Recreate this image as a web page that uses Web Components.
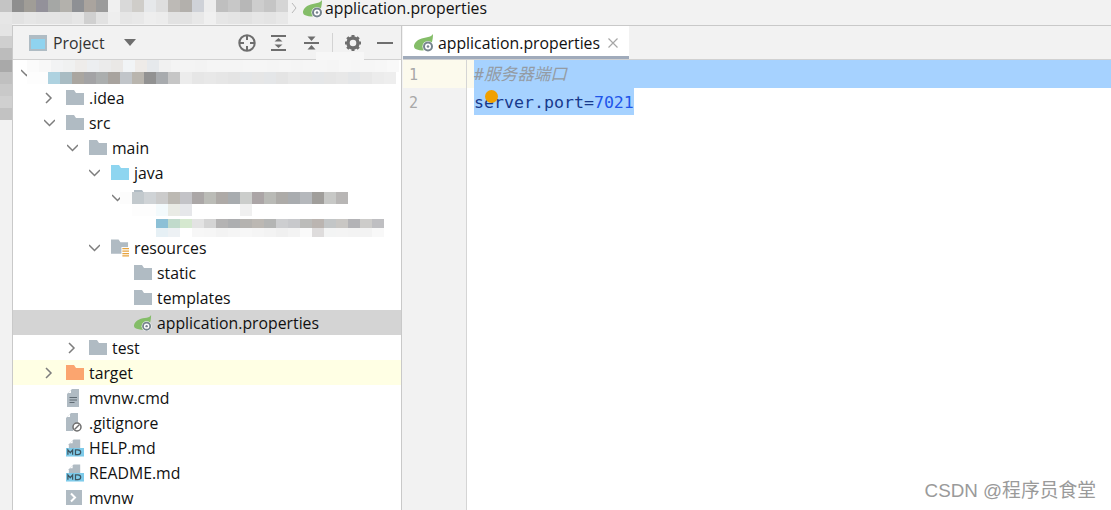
<!DOCTYPE html>
<html>
<head>
<meta charset="utf-8">
<title>application.properties</title>
<style>
    html, body { margin: 0; padding: 0; background: #f2f2f2; }
    body { width: 1111px; height: 510px; overflow: hidden; font-family: "Open Sans", "Noto Sans CJK SC", sans-serif; }
</style>
</head>
<body>
<ide-window>
    <top-bar slot="top">application.properties</top-bar>
    <project-pane slot="left">
        <tree-row depth="-1" arrow="down"></tree-row>
        <tree-row depth="0" arrow="right" icon="folder">.idea</tree-row>
        <tree-row depth="0" arrow="down" icon="folder">src</tree-row>
        <tree-row depth="1" arrow="down" icon="folder">main</tree-row>
        <tree-row depth="2" arrow="down" icon="source">java</tree-row>
        <tree-row depth="3" arrow="down" icon="folder"></tree-row>
        <tree-row depth="4"></tree-row>
        <tree-row depth="2" arrow="down" icon="resources">resources</tree-row>
        <tree-row depth="3" icon="folder">static</tree-row>
        <tree-row depth="3" icon="folder">templates</tree-row>
        <tree-row depth="3" icon="spring" state="selected">application.properties</tree-row>
        <tree-row depth="1" arrow="right" icon="folder">test</tree-row>
        <tree-row depth="0" arrow="right" icon="excluded" state="ignored">target</tree-row>
        <tree-row depth="0" icon="text">mvnw.cmd</tree-row>
        <tree-row depth="0" icon="ignore">.gitignore</tree-row>
        <tree-row depth="0" icon="md">HELP.md</tree-row>
        <tree-row depth="0" icon="md">README.md</tree-row>
        <tree-row depth="0" icon="shell">mvnw</tree-row>
    </project-pane>
    <editor-pane slot="main" file="application.properties"></editor-pane>
</ide-window>

<!-- blurred-out areas of the screenshot -->
<mosaic-patch style="left:0;top:0" size="12" cols="24" colors="#c4c4c4 #8e8e8e #a09d97 #93919a #a5a7a5 #b3b1ac #8e9094 #aaa49e #9b9b9b #f0f0f0 #d9d9d9 #cfcdc9 #e6e8ea #dedede #bdbab6 #b3b0ac #cfd2d8 #ededed #bfbfbf #c7c7c7 #b7b7b7 #cdcdcd #c5c5c5 #d5d5d5 #e6e6e6 #e2e2e2 #e6e6e6 #e4e4e4 #e4e4e4 #e2e2e2 #e6e6e6 #d0d0d0 #e2e2e2 #eeeeee #e6e6e6 #e8e8e8 #eeeeee #ececec #e2e2e2 #e2e2e2 #e8e8e8 #f0f0f0 #e6e6e6 #e4e4e4 #e2e2e2 #e6e6e6 #e4e4e4 #e8e8e8"></mosaic-patch>
<mosaic-patch style="left:0;top:24px" size="12" cols="1" colors="#e4e4e4 #cfcfcf #bcbcbc #a9a9a9 #c0c0c0 #c9c9c9 #d0d0d0 #c2c2c2"></mosaic-patch>
<mosaic-patch style="left:27px;top:60px" size="12" cols="31" colors="#fbfbfb #f8f8f8 #f2f3f4 #f0f1f1 #eeecea #eceef0 #ebebeb #eae8e6 #f1f4f6 #eeebe8 #e6e9ec #f1f1f1 #f4f4f4 #f4f4f4 #f3f3f3 #f5f5f5 #f5f5f5 #f5f5f5 #f6f6f6 #f6f6f6 #f5f5f5 #f6f6f6 #f5f5f5 #f6f6f6 #f6f6f6 #f5f5f5 #f7f7f7 #f6f6f6 #f6f6f6 #f7f7f7 #f9f9f9"></mosaic-patch>
<mosaic-patch style="left:27px;top:72px" size="21" height="12" cols="1" colors="#fdfdfd"></mosaic-patch>
<mosaic-patch style="left:48px;top:72px" size="12" cols="29" colors="#aed2e0 #a9bcc3 #aaa6a0 #a3a3a5 #abaeae #a8a39e #c1c5c9 #b9b5ae #929292 #a8abae #c6c6c6 #ececec #e6e6e6 #e8e8e8 #e6e6e6 #e4e4e4 #e4e6e8 #e6e6e6 #e4e6e8 #e4e4e4 #e8e8e8 #e6e6e6 #e4e6e8 #e6e6e6 #e8e8e8 #e4e6e8 #e8e8e8 #ececec #eeeeee"></mosaic-patch>
<mosaic-patch style="left:120px;top:192px" size="12" cols="19" colors="#fcfcfc #c2c9cd #cfd3d6 #cbcbcb #bcb9b3 #c3c3c7 #aba7a7 #bbbcb7 #aeaaa7 #a8acaf #cbcdcb #aba5a6 #b9bab6 #adaba8 #a9acaf #b5b8bc #a09e9b #c7c8c6 #b8b6b5 #fff #fdfdfd #fdfdfd #f3fafc #e9ebe5 #e6e7ea #fff #fff #fff #fff #f0f0f0 #fff #fff #fff #fff #fff #fff #fff #fff"></mosaic-patch>
<mosaic-patch style="left:156px;top:219px" size="12" height="9" cols="19" colors="#8cc0d6 #c0dacb #d5e8cf #e3e3e3 #d4d4d4 #b4b3b3 #adaeb0 #b5b3b0 #bcb8b3 #b4b5b4 #cdced0 #c8c9cc #bcbcba #bbb5b1 #c3c6c7 #c9c7c4 #b3b3b6 #cdccca #bfbfc2 #e6f0f5 #edf1f4 #fff #f7f7f7 #f6f6f6 #f3f3f3 #f5f5f5 #f7f7f7 #f5f5f5 #f3f3f3 #f0f0f0 #f3f3f3 #fafafa #dedcdc #f3f4f4 #f4f4f4 #f3f3f3 #f3f3f3 #f8f8f8"></mosaic-patch>
<mosaic-patch style="left:316px;top:52px" size="12" height="8" cols="4" colors="#f7f7f7 #f7f7f7 #f7f7f7 #f7f7f7"></mosaic-patch>

<script>
/* all the little tool window / file type icons */
const ICONS = {
    folder: `<svg width="18" height="15" viewBox="0 0 18 15"><path fill="#b0bbc3" d="M0 0h8l2 3h8v12H0z"/></svg>`,
    source: `<svg width="18" height="15" viewBox="0 0 18 15"><path fill="#8ed5f0" d="M0 0h8l2 3h8v12H0z"/></svg>`,
    excluded: `<svg width="18" height="15" viewBox="0 0 18 15"><path fill="#fba56f" d="M0 0h8l2 3h8v12H0z"/></svg>`,
    resources: `<svg width="19" height="18" viewBox="0 0 19 18"><path fill="#b0bbc3" d="M0 0h8l2 3h8v12H0z"/><rect x="11" y="8" width="8" height="10" fill="#fff"/><path stroke="#e8a33d" stroke-width="1.400" d="M12 9.700h7M12 12.300h7M12 14.900h7M12 17.400h7"/></svg>`,
    spring: `<svg width="20" height="18" viewBox="0 0 20 18"><path fill="#84bd68" d="M19 0c-1.500 2.500-4 3-7 3.500C6 4.300 1 7 0 11.500c-.2 2 .8 3.500 3 4 4 1.500 8.500 1 11-.5 3.500-3 5-9 5-15z"/><circle cx="14" cy="12.500" r="5.500" fill="#fff"/><circle cx="14" cy="12.500" r="4" fill="none" stroke="#76848e" stroke-width="2"/><circle cx="14" cy="12.500" r="1.300" fill="#76848e"/></svg>`,
    text: `<svg width="14" height="18" viewBox="0 0 14 18"><path fill="#b0bbc3" d="M6 0h7v18H1V5z"/><path fill="#fff" d="M5 1v3H2z"/><path stroke="#5f6a72" stroke-width="1.200" d="M3.500 8.500h7.500M3.500 11h7.500M3.500 13.500h5"/></svg>`,
    ignore: `<svg width="16" height="19" viewBox="0 0 16 19"><path fill="#b0bbc3" d="M5 0h7v13H7v5H0V5z"/><path fill="#fff" d="M4 1v3H1z"/><circle cx="11" cy="14" r="4" fill="#fff" stroke="#6e6e6e" stroke-width="1.500"/><path stroke="#6e6e6e" stroke-width="1.500" d="M8.500 16.500l5-5"/></svg>`,
    md: `<svg width="19" height="18" viewBox="0 0 19 18"><path fill="#b0bbc3" d="M8 0h7v9H3V5z"/><path fill="#fff" d="M7 1v3H4z"/><rect y="9" width="19" height="9" fill="#7ecbea"/><path fill="none" stroke="#3f5560" stroke-width="1.300" d="M2 16v-5l2.500 3 2.500-3v5M10 11v5h2.500q3 0 3-2.500t-3-2.500z"/></svg>`,
    shell: `<svg width="16" height="15" viewBox="0 0 16 15"><rect width="16" height="15" fill="#b0bbc3"/><path fill="none" stroke="#fff" stroke-width="2" d="M5 3.500l4 4-4 4"/></svg>`
};

class IdeWindow extends HTMLElement {
    constructor() {
        super();
        this.attachShadow({ mode: "open" });
    }

    connectedCallback() {
        this.shadowRoot.innerHTML = `
            <style>
                :host { display: grid; grid-template-rows: 26px 484px; width: 1111px; height: 510px; }
                .body { display: grid; grid-template-columns: 403px 1fr; min-height: 0; }
            </style>
            <slot name="top"></slot>
            <div class="body">
                <slot name="left"></slot>
                <slot name="main"></slot>
            </div>
        `;
    }
}

class TopBar extends HTMLElement {
    constructor() {
        super();
        this.attachShadow({ mode: "open" });
    }

    connectedCallback() {
        this.shadowRoot.innerHTML = `
            <style>
                :host {
                    display: flex; align-items: flex-start; box-sizing: border-box;
                    padding-left: 291px; height: 26px; background: #f2f2f2; border-bottom: 1px solid #c9c9c9;
                    font: 15.8px/17px "Open Sans", sans-serif; color: #111;
                }
                .chev { margin: 2px 6px 0 0; }
                .leaf { margin: 0 2px 0 0; display: flex; }
            </style>
            <svg class="chev" width="6" height="12" viewBox="0 0 6 12"><path d="M1 1l4 5-4 5" fill="none" stroke="#b9b9b9" stroke-width="1"/></svg>
            <div class="leaf">${ICONS.spring}</div>
            <span><slot></slot></span>
        `;
    }
}

class ProjectPane extends HTMLElement {
    constructor() {
        super();
        this.attachShadow({ mode: "open" });
    }

    connectedCallback() {
        this.shadowRoot.innerHTML = `
            <style>
                :host {
                    display: block; box-sizing: border-box; margin: 0 1px 0 12px; height: 484px;
                    border-left: 1px solid #c9c9c9; border-right: 1px solid #c9c9c9;
                    background: #fff; overflow: hidden;
                }
                header {
                    display: flex; align-items: center; box-sizing: border-box; height: 34px;
                    padding: 0 0 0 16px; background: #f2f2f2; border-bottom: 1px solid #d1d1d1;
                    font: 15.8px "Open Sans", sans-serif; color: #333;
                }
                .title { margin-left: 6px; }
                .caret { margin-left: 19px; }
                .tools { display: flex; align-items: center; margin-left: auto; padding-right: 8px; }
                .tools > * { flex: none; }
                .sep { width: 1px; height: 20px; background: #d3d3d3; }
            </style>
            <header>
                <svg width="18" height="16" viewBox="0 0 18 16"><rect width="18" height="16" fill="#afbcc4"/><rect x="2" y="4" width="14" height="10" fill="#8fd3ef"/></svg>
                <span class="title">Project</span>
                <svg class="caret" width="12" height="7" viewBox="0 0 12 7"><path d="M0 0h12L6 7z" fill="#6e6e6e"/></svg>
                <div class="tools">
                    <svg width="18" height="18" viewBox="0 0 18 18" fill="none" stroke="#6e6e6e" stroke-width="2"><circle cx="9" cy="9" r="7.700"/><path d="M9 2v4M9 12v4M2 9h4M12 9h4"/></svg>
                    <svg style="margin-left:14px" width="18" height="18" viewBox="0 0 18 18" fill="#6e6e6e"><path d="M1 1h15v2H1zM1 15h15v2H1zM8.500 4l4 3.500h-8zM8.500 14l-4-3.500h8z"/></svg>
                    <svg style="margin-left:15px" width="18" height="18" viewBox="0 0 18 18" fill="#6e6e6e"><path d="M1 8h15v2H1zM8.500 7l-4-4.500h8zM8.500 11l4 4.500h-8z"/></svg>
                    <div class="sep" style="margin-left:11px"></div>
                    <svg style="margin-left:11px" width="18" height="18" viewBox="0 0 18 18"><circle cx="9" cy="9" r="5" fill="none" stroke="#6e6e6e" stroke-width="3.400"/><path stroke="#6e6e6e" stroke-width="3" d="M9 1v3M9 14v3M1 9h3M14 9h3M3.300 3.300l2.100 2.100M12.600 12.600l2.100 2.100M3.300 14.700l2.100-2.100M12.600 5.400l2.100-2.100"/></svg>
                    <svg style="margin-left:15px" width="16" height="18" viewBox="0 0 16 18"><rect y="8" width="16" height="2" fill="#6e6e6e"/></svg>
                </div>
            </header>
            <slot></slot>
        `;
    }
}

class TreeRow extends HTMLElement {
    constructor() {
        super();
        this.attachShadow({ mode: "open" });
    }

    connectedCallback() {
        const depth = Number(this.getAttribute("depth") || 0);
        const arrow = this.getAttribute("arrow");
        const icon = this.getAttribute("icon");
        const left = 31 + Math.round(depth * 22.7);
        let chevron = "";
        if (arrow === "right") chevron = `<path d="M2 1l5 5-5 5"/>`;
        if (arrow === "down") chevron = `<path d="M0 3l5.500 5.500L11 3"/>`;
        this.shadowRoot.innerHTML = `
            <style>
                :host {
                    display: flex; align-items: center; box-sizing: border-box; height: 25px;
                    padding-left: ${left}px; white-space: nowrap;
                    font: 15.8px "Open Sans", sans-serif; color: #111;
                }
                :host([state="selected"]) { background: #d4d4d4; }
                :host([state="ignored"]) { background: #ffffe4; }
                .arrow { width: 11px; height: 12px; flex: none; }
                .icon { display: flex; width: 18px; margin-left: 11px; flex: none; }
                .text { margin-left: 5px; }
            </style>
            <svg class="arrow" viewBox="0 0 11 12" fill="none" stroke="#7d7d7d" stroke-width="1.500">${chevron}</svg>
            <div class="icon">${icon ? ICONS[icon] : ""}</div>
            <span class="text"><slot></slot></span>
        `;
    }
}

class EditorPane extends HTMLElement {
    constructor() {
        super();
        this.attachShadow({ mode: "open" });
    }

    connectedCallback() {
        this.shadowRoot.innerHTML = `
            <style>
                :host { display: grid; grid-template-rows: 34px 1fr; height: 484px; background: #fff; position: relative; }
                .tabs { background: #f2f2f2; border-bottom: 1px solid #d1d1d1; display: flex; }
                .tab {
                    display: flex; align-items: center; box-sizing: border-box; width: 226px; height: 33px;
                    padding: 4px 0 0 11px; background: #fff; border-bottom: 3px solid #a0abbb;
                    font: 15.8px "Open Sans", sans-serif; color: #111;
                }
                .tab span { margin-left: 4px; }
                .tab svg:last-child { margin-left: 8px; }
                .content { display: grid; grid-template-columns: 64px 1fr; grid-template-rows: 28px 27px 1fr; }
                .num {
                    box-sizing: border-box; padding-left: 6px; border-right: 1px solid #d5d5d5; background: #f2f2f2;
                    font: 15px/30px "DejaVu Sans Mono", monospace; color: #a8a8a8;
                }
                .num.current { background: #fcfaed; }
                .code { padding-left: 7px; }
                .code.current { background: #fcfaed; }
                .sel {
                    display: block; background: #a6d2ff;
                    font: 16.6px/29px "DejaVu Sans Mono", "Noto Sans CJK SC", monospace; color: #17398c;
                    white-space: pre; height: 100%;
                }
                .sel.short { display: inline-block; }
                .comment { color: #949ba3; font-style: italic; }
                .value { color: #1f55ea; }
                .gutter-rest { background: #f2f2f2; border-right: 1px solid #d5d5d5; }
                /* breakpoint-like marker lying over the second line */
                .dot { position: absolute; left: 82px; top: 64px; width: 13px; height: 13px; border-radius: 50%; background: #f0a000; }
            </style>
            <div class="tabs">
                <div class="tab">
                    ${ICONS.spring}
                    <span>${this.getAttribute("file")}</span>
                    <svg width="10" height="10" viewBox="0 0 10 10"><path d="M0.500 0.500l9 9M9.500 0.500l-9 9" stroke="#a6a6a6" stroke-width="1.200"/></svg>
                </div>
            </div>
            <div class="content">
                <div class="num current">1</div>
                <div class="code current"><span class="sel comment">#服务器端口</span></div>
                <div class="num">2</div>
                <div class="code"><span class="sel short">server.port=<span class="value">7021</span></span></div>
                <div class="gutter-rest"></div>
                <div></div>
            </div>
            <div class="dot"></div>
        `;
    }
}

/* grid of flat colour cells standing in for the pixelated parts */
class MosaicPatch extends HTMLElement {
    constructor() {
        super();
        this.attachShadow({ mode: "open" });
    }

    connectedCallback() {
        const size = this.getAttribute("size");
        const height = this.getAttribute("height") || size;
        const cols = this.getAttribute("cols");
        const cells = this.getAttribute("colors").trim().split(/\s+/)
            .map(c => `<i style="background:${c}"></i>`).join("");
        this.shadowRoot.innerHTML = `
            <style>
                :host { position: absolute; display: grid; grid-template-columns: repeat(${cols}, ${size}px); grid-auto-rows: ${height}px; }
                i { display: block; }
            </style>
            ${cells}
        `;
    }
}

class WaterMark extends HTMLElement {
    constructor() {
        super();
        this.attachShadow({ mode: "open" });
    }

    connectedCallback() {
        this.shadowRoot.innerHTML = `
            <style>
                :host { position: absolute; right: 15px; bottom: 8px; font: 18.8px "Liberation Sans", "Noto Sans CJK SC", sans-serif; color: #9a9a9a; }
            </style>
            <slot></slot>
        `;
    }
}

customElements.define("ide-window", IdeWindow);
customElements.define("top-bar", TopBar);
customElements.define("project-pane", ProjectPane);
customElements.define("tree-row", TreeRow);
customElements.define("editor-pane", EditorPane);
customElements.define("mosaic-patch", MosaicPatch);
customElements.define("water-mark", WaterMark);
</script>
<water-mark>CSDN @程序员食堂</water-mark>
</body>
</html>
